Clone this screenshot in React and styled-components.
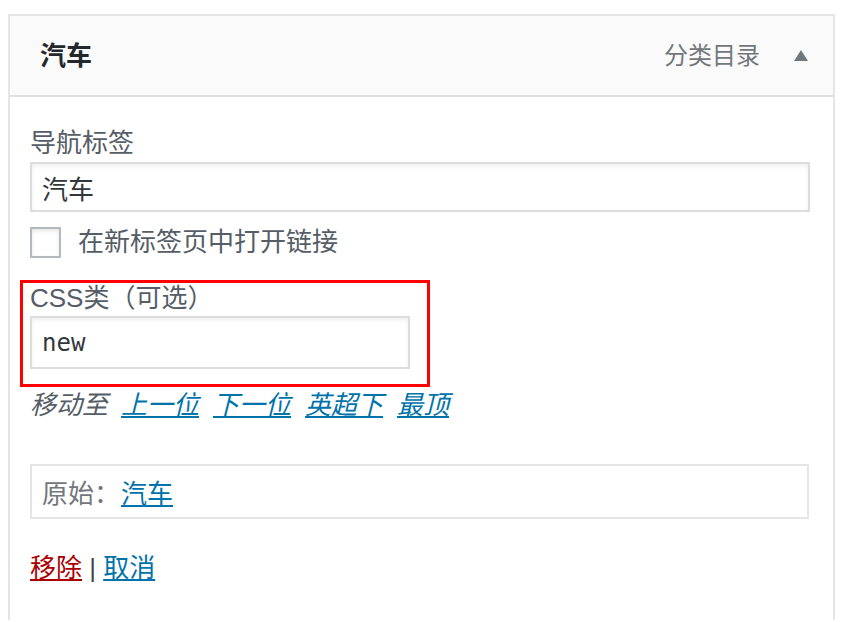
import React from 'react';
import styled, { createGlobalStyle } from 'styled-components';

const GlobalStyle = createGlobalStyle`
  html, body {
    margin: 0;
    padding: 0;
    background: #fff;
  }
  body {
    font-family: "Liberation Sans", "Noto Sans CJK SC", sans-serif;
    font-size: 26px;
  }
`;

const Panel = styled.div`
  margin: 14px 0 0 8px;
  width: 827px;
  box-sizing: border-box;
  border: 2px solid #e5e5e5;
  border-bottom: none;
  background: #fff;
`;

const Header = styled.div`
  height: 79px;
  display: flex;
  align-items: center;
  padding: 0 25px 0 30px;
  background: #fafafa;
  border-bottom: 2px solid #dfdfdf;
`;

const Title = styled.div`
  flex: 1;
  font-weight: bold;
  color: #23282d;
  line-height: 36px;
`;

const ItemType = styled.span`
  color: #72777c;
  font-size: 24px;
  line-height: 36px;
`;

const Toggle = styled.span`
  width: 0;
  height: 0;
  margin-left: 34px;
  border-left: 7px solid transparent;
  border-right: 7px solid transparent;
  border-bottom: 11px solid #72777c;
`;

const Body = styled.div`
  padding: 28px 24px 34px 20px;
`;

const Label = styled.div`
  color: #555d66;
  line-height: ${p => p.$lh || 36}px;
`;

const Input = styled.div`
  box-sizing: border-box;
  width: ${p => p.$w}px;
  height: ${p => p.$h}px;
  margin-top: ${p => p.$mt}px;
  border: 2px solid #ddd;
  box-shadow: inset 0 2px 4px rgba(0, 0, 0, 0.07);
  padding: 0 10px;
  display: flex;
  align-items: center;
  color: #32373c;
  font-family: ${p => (p.$mono ? '"DejaVu Sans Mono", monospace' : 'inherit')};
  font-size: ${p => (p.$mono ? 24 : 26)}px;
`;

const CheckRow = styled.div`
  display: flex;
  align-items: center;
  margin-top: 15px;
  height: 31px;
  line-height: 31px;
  color: #555d66;
`;

const Checkbox = styled.span`
  box-sizing: border-box;
  width: 31px;
  height: 31px;
  border: 2px solid #b4b9be;
  box-shadow: inset 0 2px 4px rgba(0, 0, 0, 0.1);
  margin-right: 17px;
`;

const Highlight = styled.div`
  margin: 22px 0 0 -10px;
  width: 410px;
  box-sizing: border-box;
  border: 3px solid #f00;
  padding: 0 0 15px 7px;
`;

const MoveRow = styled.div`
  display: flex;
  gap: 14px;
  line-height: 36px;
  font-style: italic;
`;

const MoveLabel = styled.span`
  color: #555d66;
  margin-right: -1px;
`;

const Link = styled.a`
  color: ${p => (p.$danger ? '#a00' : '#0073aa')};
  text-decoration: underline;
  cursor: pointer;
`;

const Original = styled.div`
  box-sizing: border-box;
  height: 55px;
  margin-top: 41px;
  border: 2px solid #e5e5e5;
  padding: 0 10px;
  display: flex;
  align-items: center;
  gap: 1px;
`;

const OriginalLabel = styled.span`
  color: #72777c;
`;

const Actions = styled.div`
  margin-top: 31px;
  line-height: 36px;
  color: #444;
`;

export default function App() {
  return (
    <>
      <GlobalStyle />
      <Panel>
        <Header>
          <Title>汽车</Title>
          <ItemType>分类目录</ItemType>
          <Toggle />
        </Header>
        <Body>
          <Label>导航标签</Label>
          <Input $w={780} $h={50} $mt={1}>汽车</Input>
          <CheckRow>
            <Checkbox />
            在新标签页中打开链接
          </CheckRow>
          <Highlight>
            <Label $lh={30}>CSS类（可选）</Label>
            <Input $w={380} $h={53} $mt={3} $mono>new</Input>
          </Highlight>
          <MoveRow>
            <MoveLabel>移动至</MoveLabel>
            <Link>上一位</Link>
            <Link>下一位</Link>
            <Link>英超下</Link>
            <Link>最顶</Link>
          </MoveRow>
          <Original>
            <OriginalLabel>原始：</OriginalLabel>
            <Link>汽车</Link>
          </Original>
          <Actions>
            <Link $danger>移除</Link> | <Link>取消</Link>
          </Actions>
        </Body>
      </Panel>
    </>
  );
}
